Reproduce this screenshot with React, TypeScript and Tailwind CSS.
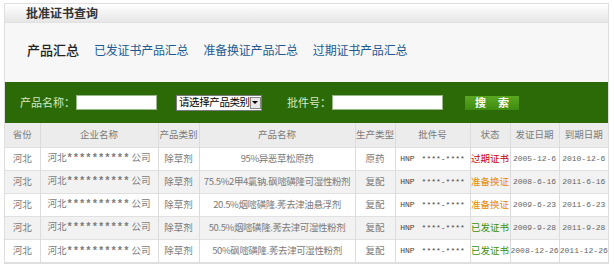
import React from 'react';

const cols = [
  { label: '省份', w: 'w-[35px]' },
  { label: '企业名称', w: 'w-[118px]' },
  { label: '产品类别', w: 'w-[41px]' },
  { label: '产品名称', w: 'w-[156px]' },
  { label: '生产类型', w: 'w-[40px]' },
  { label: '批件号', w: 'w-[75px]' },
  { label: '状态', w: 'w-[40px]' },
  { label: '发证日期', w: 'w-[49px]' },
  { label: '到期日期', w: 'w-[49px]' },
];

const rows = [
  { name: '95%异恶草松原药', type: '原药', status: '过期证书', sc: 'text-[#c40000]', from: '2005-12-6', to: '2010-12-6' },
  { name: '75.5%2甲4氯钠.砜嘧磺隆可湿性粉剂', type: '复配', status: '准备换证', sc: 'text-[#e58a00]', from: '2008-6-16', to: '2011-6-16' },
  { name: '20.5%烟嘧磺隆.莠去津油悬浮剂', type: '复配', status: '准备换证', sc: 'text-[#e58a00]', from: '2009-6-23', to: '2011-6-23' },
  { name: '50.5%烟嘧磺隆.莠去津可湿性粉剂', type: '复配', status: '已发证书', sc: 'text-[#3c8f0a]', from: '2009-9-28', to: '2011-9-28' },
  { name: '50%砜嘧磺隆.莠去津可湿性粉剂', type: '复配', status: '已发证书', sc: 'text-[#3c8f0a]', from: '2008-12-26', to: '2011-12-26' },
];

const cell = 'text-center border-r border-[#dcdcdc] p-0 whitespace-nowrap overflow-hidden';
const mono = "font-['Liberation_Mono',monospace] text-[8px]";

export default function App() {
  return (
    <div className="w-[614px] h-[269px] bg-white pt-[3px] pl-[4px] overflow-hidden font-['Noto_Sans_CJK_SC',sans-serif] text-[12px]">
      <div className="w-[605px] border border-[#dedede] bg-[#f7f7f7]">
        {/* title bar */}
        <div className="h-[19px] flex items-center pl-[21px] bg-gradient-to-b from-white to-[#e6e6e6] border-b border-[#e2e2e2]">
          <span className="font-bold text-[#333] text-[12px] leading-none">批准证书查询</span>
        </div>

        {/* tabs */}
        <div className="h-[59px] flex items-center pl-[22px] pb-[5px] gap-[15px] text-[12px]">
          <span className="text-[13px] text-[#222] font-medium">产品汇总</span>
          <span className="text-[#1d5a92] tracking-[-0.2px]">已发证书产品汇总</span>
          <span className="text-[#1d5a92] tracking-[-0.2px]">准备换证产品汇总</span>
          <span className="text-[#1d5a92] tracking-[-0.2px]">过期证书产品汇总</span>
        </div>

        {/* search bar */}
        <div className="h-[41px] bg-[#2b6a06] flex items-center pl-[15px] text-[11px] text-[#d6ecc4] whitespace-nowrap">
          <span className="w-[56px]">产品名称：</span>
          <div className="w-[81px] h-[15px] bg-white border border-[#9ab88a]" />
          <div className="ml-[19px] w-[86px] h-[16px] bg-white border border-[#7a7a7a] flex items-center pl-[2px] text-[10.5px] text-black overflow-hidden">
            <span className="flex-1 leading-none tracking-[-0.4px]">请选择产品类别</span>
            <span className="w-[11px] h-[12px] mr-[1px] bg-[#e8e8e8] border border-[#888] flex items-center justify-center shrink-0">
              <span className="w-0 h-0 border-l-[3px] border-r-[3px] border-t-[3px] border-l-transparent border-r-transparent border-t-black" />
            </span>
          </div>
          <span className="ml-[25px] w-[45px]">批件号：</span>
          <div className="w-[111px] h-[15px] bg-white border border-[#9ab88a]" />
          <div className="ml-[22px] w-[54px] h-[14px] bg-gradient-to-b from-[#5aa821] to-[#3f8b10] flex items-center justify-center gap-[12px] text-white font-bold text-[11px] leading-none">
            <span>搜</span><span>索</span>
          </div>
        </div>

        {/* table */}
        <table className="table-fixed border-collapse w-[603px] text-[9.5px] text-[#7a7a7a] leading-none">
          <thead>
            <tr className="h-[24px] bg-[#ececec]">
              {cols.map((c) => (
                <th key={c.label} className={`${c.w} font-normal border-r border-[#dcdcdc] last:border-r-0 text-center p-0 whitespace-nowrap`}>{c.label}</th>
              ))}
            </tr>
          </thead>
          <tbody>
            {rows.map((r, i) => (
              <tr key={i} className={`h-[23px] border-t border-[#e0e0e0] ${i % 2 === 1 ? 'bg-[#f2f2f2]' : 'bg-white'}`}>
                <td className={cell}>河北</td>
                <td className={cell}>河北<span className="font-['Liberation_Mono',monospace] text-[10.5px] font-bold">**********</span> 公司</td>
                <td className={cell}>除草剂</td>
                <td className={`${cell} tracking-[-0.4px]`}>{r.name}</td>
                <td className={cell}>{r.type}</td>
                <td className={`${cell} ${mono} text-[#444]`}>HNP<span className="ml-[7px]">****-****</span></td>
                <td className={`${cell} text-[9.5px] ${r.sc}`}>{r.status}</td>
                <td className={`${cell} ${mono} text-[#666]`}>{r.from}</td>
                <td className={`text-center p-0 whitespace-nowrap ${mono} text-[#666]`}>{r.to}</td>
              </tr>
            ))}
          </tbody>
        </table>
        <div className="h-[1px] border-t border-[#e0e0e0] bg-white" />
      </div>
    </div>
  );
}
